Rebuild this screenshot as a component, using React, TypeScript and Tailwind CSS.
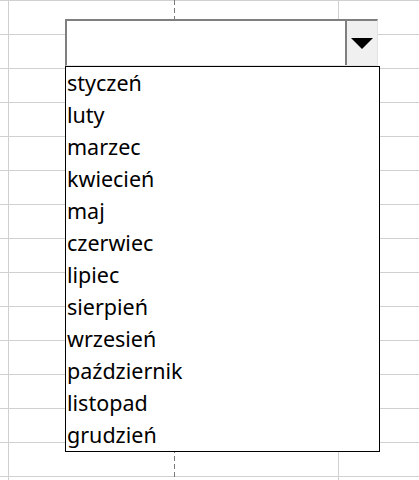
import React from "react";

const months = [
  "styczeń",
  "luty",
  "marzec",
  "kwiecień",
  "maj",
  "czerwiec",
  "lipiec",
  "sierpień",
  "wrzesień",
  "październik",
  "listopad",
  "grudzień",
];

const rows = Array.from({ length: 15 }, (_, i) => i);

export default function App() {
  return (
    <div className="relative w-[419px] h-[480px] overflow-hidden bg-white font-['Noto_Sans',sans-serif]">
      {/* Sheet grid */}
      <div className="grid grid-cols-[9px_330px_80px]">
        {rows.map((r) => (
          <React.Fragment key={r}>
            <div className="h-[34px] border-t border-r border-[#d0d0d0]" />
            <div className="h-[34px] border-t border-r border-[#d0d0d0]" />
            <div className="h-[34px] border-t border-[#d0d0d0]" />
          </React.Fragment>
        ))}
      </div>

      {/* Page break */}
      <div className="absolute left-[174px] top-0 h-full w-px bg-[repeating-linear-gradient(to_bottom,#7a7a7a_0px,#7a7a7a_5px,transparent_5px,transparent_8px)]" />

      {/* Combo box + list */}
      <div className="absolute left-[65px] top-[19px] w-[315px]">
        <div className="w-[313px] h-[47px] flex bg-white border-t-2 border-l-2 border-r border-b border-t-[#7f7f7f] border-l-[#7f7f7f] border-r-[#e3e3e3] border-b-[#e3e3e3]">
          <div className="flex-1" />
          <div className="w-[32px] flex items-center justify-center bg-[#f0f0f0] border-l-2 border-[#7f7f7f]">
            <svg width="22" height="11" viewBox="0 0 22 11" className="mt-[1px]">
              <polygon points="0,0 22,0 11,11" fill="#000" />
            </svg>
          </div>
        </div>
        <ul className="border border-black bg-white">
          {months.map((m) => (
            <li key={m} className="h-[32px] pl-[1px] text-[21.5px] leading-[32px] text-black">
              {m}
            </li>
          ))}
        </ul>
      </div>
    </div>
  );
}
